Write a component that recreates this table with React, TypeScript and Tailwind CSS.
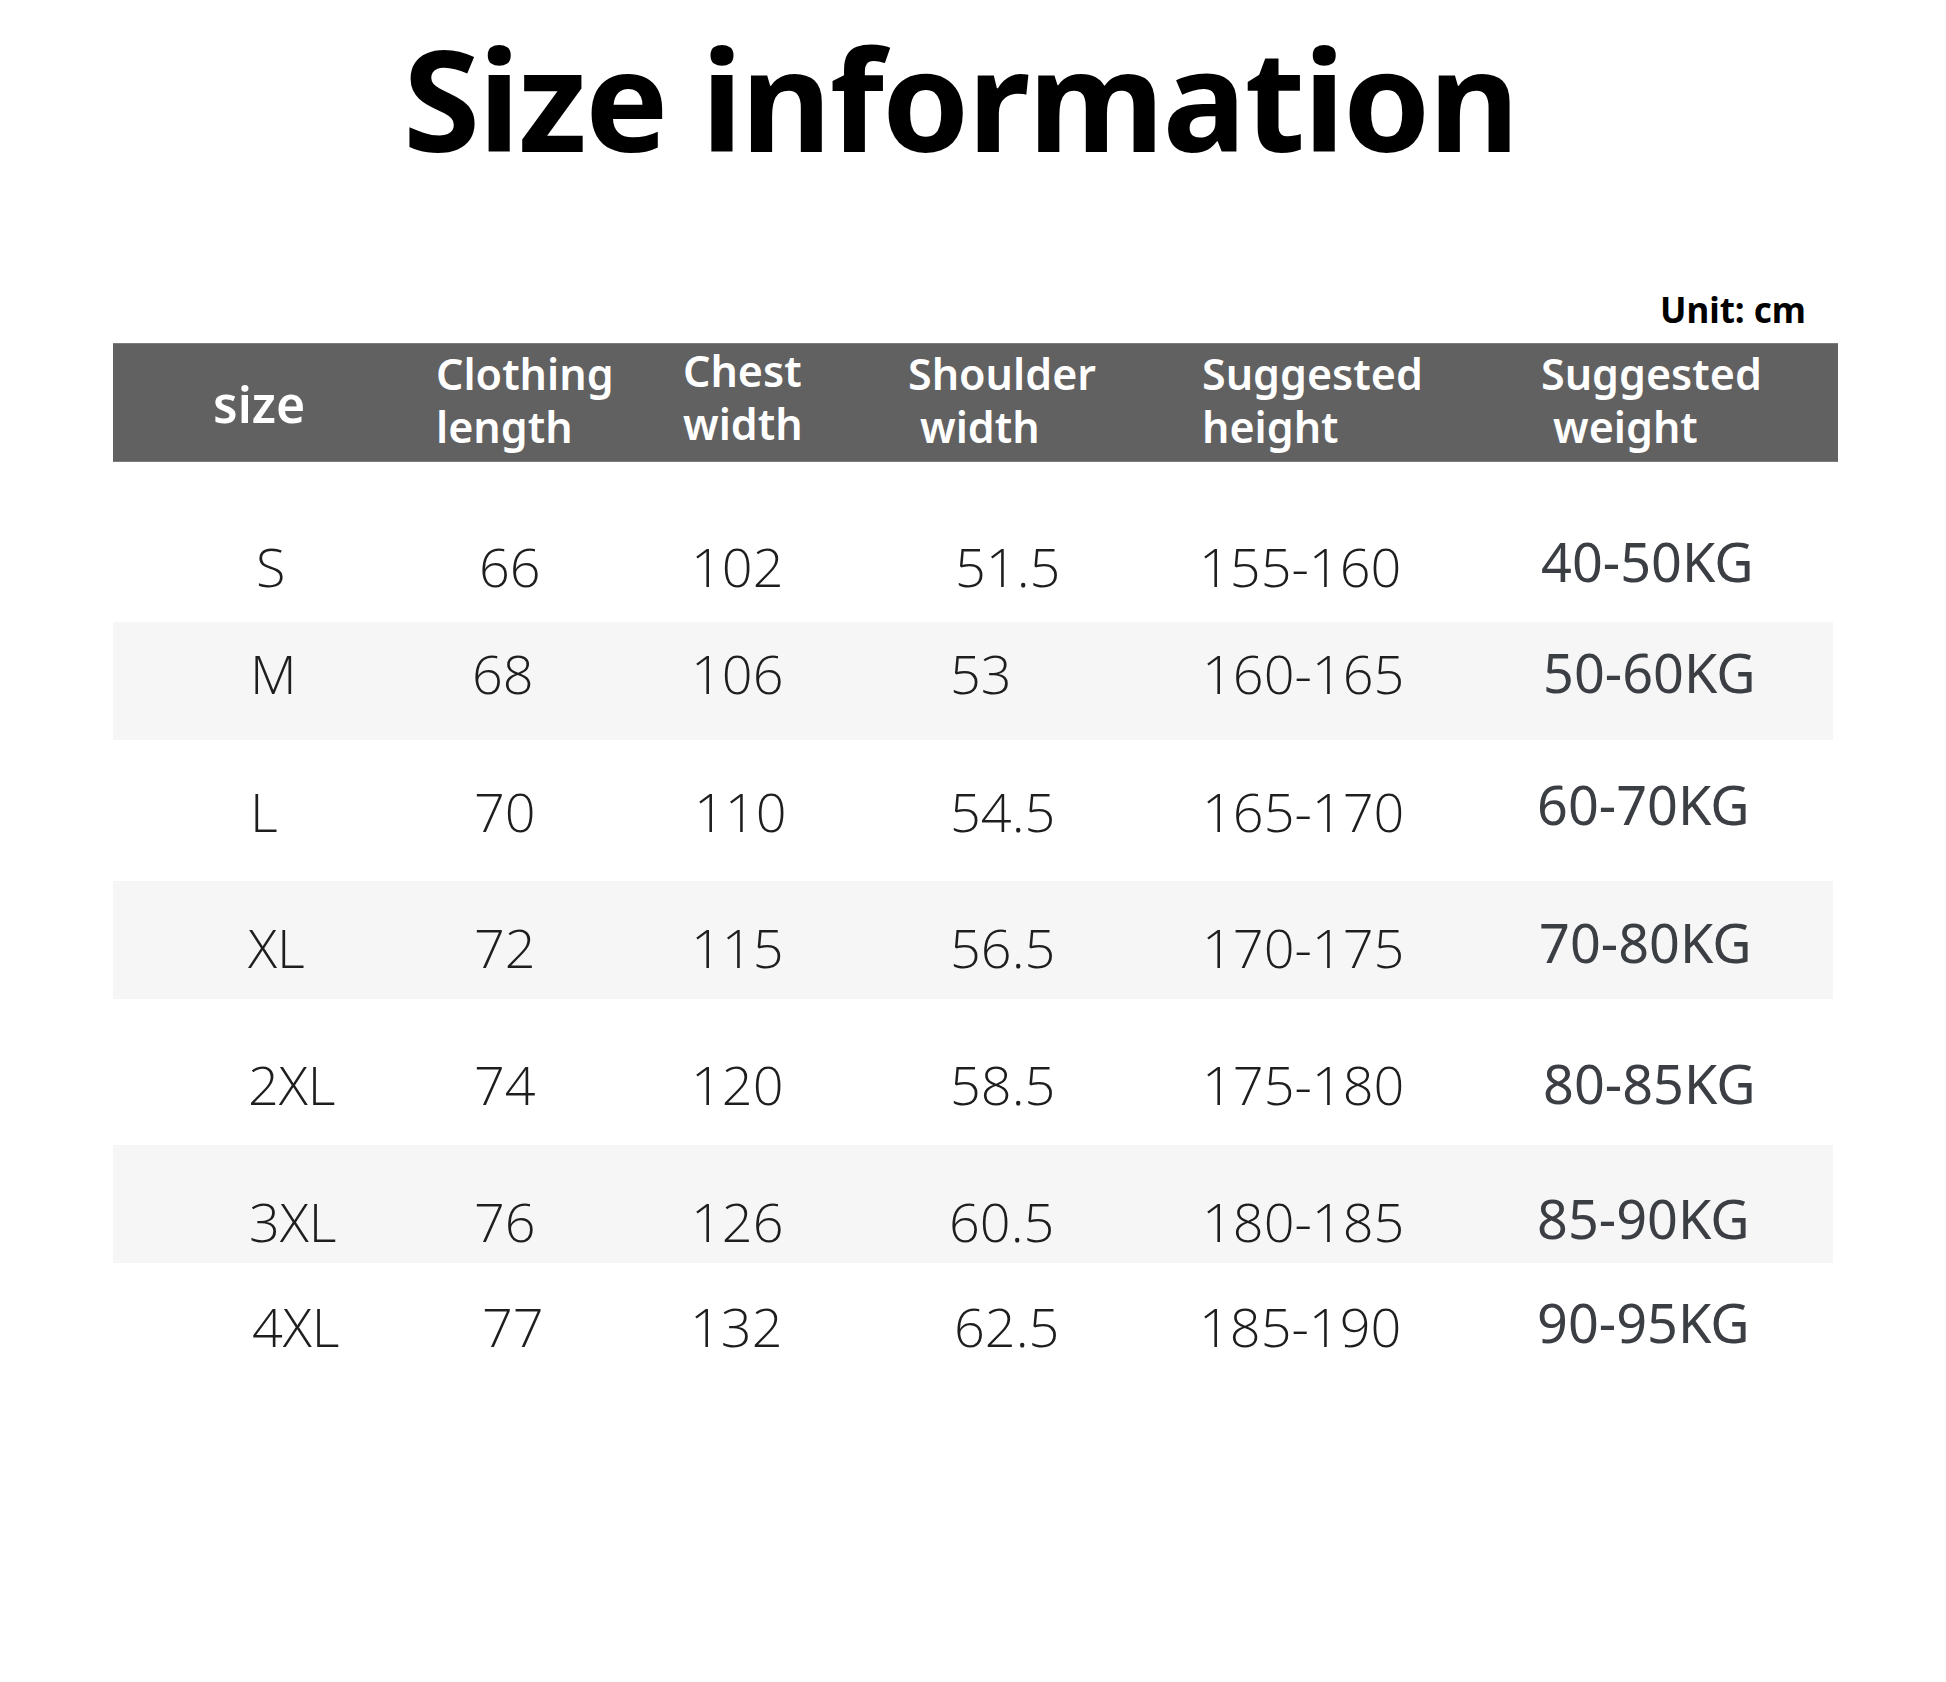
import React from "react";

type Row = {
  h: string;
  band: boolean;
  cells: [string, string, string, string, string, string];
  pad: [string, string, string, string, string, string];
};

const rows: Row[] = [
  {
    h: "h-[160px] pt-[48px]",
    band: false,
    cells: ["S", "66", "102", "51.5", "155-160", "40-50KG"],
    pad: ["pl-[143px]", "pl-[43px]", "pl-[8px]", "pl-[47px]", "pl-[0px]", "pl-[4px] pb-[10px]"],
  },
  {
    h: "h-[118px] pb-[16px]",
    band: true,
    cells: ["M", "68", "106", "53", "160-165", "50-60KG"],
    pad: ["pl-[137px]", "pl-[36px]", "pl-[8px]", "pl-[42px]", "pl-[3px]", "pl-[6px] pb-[2px]"],
  },
  {
    h: "h-[141px]",
    band: false,
    cells: ["L", "70", "110", "54.5", "165-170", "60-70KG"],
    pad: ["pl-[137px]", "pl-[38px]", "pl-[11px]", "pl-[42px]", "pl-[3px]", "pl-[0px] pb-[14px]"],
  },
  {
    h: "h-[118px] pt-[14px]",
    band: true,
    cells: ["XL", "72", "115", "56.5", "170-175", "70-80KG"],
    pad: ["pl-[135px]", "pl-[38px]", "pl-[8px]", "pl-[42px]", "pl-[3px]", "pl-[2px] pb-[10px]"],
  },
  {
    h: "h-[146px] pt-[24px]",
    band: false,
    cells: ["2XL", "74", "120", "58.5", "175-180", "80-85KG"],
    pad: ["pl-[135px]", "pl-[38px]", "pl-[8px]", "pl-[42px]", "pl-[3px]", "pl-[6px] pb-[2px]"],
  },
  {
    h: "h-[118px] pt-[34px]",
    band: true,
    cells: ["3XL", "76", "126", "60.5", "180-185", "85-90KG"],
    pad: ["pl-[136px]", "pl-[38px]", "pl-[8px]", "pl-[41px]", "pl-[3px]", "pl-[0px] pb-[6px]"],
  },
  {
    h: "h-[126px]",
    band: false,
    cells: ["4XL", "77", "132", "62.5", "185-190", "90-95KG"],
    pad: ["pl-[139px]", "pl-[46px]", "pl-[7px]", "pl-[46px]", "pl-[0px]", "pl-[0px] pb-[8px]"],
  },
];

const grid = "grid grid-cols-[323px_247px_225px_291px_338px_301px]";

export default function App() {
  return (
    <div className="w-[1946px] h-[1682px] bg-white text-[#111] font-['Noto_Sans','Open_Sans',sans-serif]">
      <div className="pt-[28px] pl-[403px] text-[140px] leading-none font-bold text-black tracking-[-2px]">
        Size information
      </div>
      <div className="mt-[124px] pr-[140px] text-right text-[35px] leading-none font-bold text-black">
        Unit: cm
      </div>
      <div className="ml-[113px] w-[1725px] mt-[16px]">
        <div className={`${grid} h-[119px] bg-[#616161] border-y border-[#7c7c7c] text-white font-semibold text-[43px] leading-[53px]`}>
          <div className="flex items-center pl-[100px] pt-[2px]">
            <span className="text-[50px] leading-none">size</span>
          </div>
          <div className="flex flex-col pt-[3px]">
            <span>Clothing</span>
            <span>length</span>
          </div>
          <div className="flex flex-col pt-[0px]">
            <span>Chest</span>
            <span>width</span>
          </div>
          <div className="flex flex-col pt-[3px]">
            <span>Shoulder</span>
            <span className="pl-[12px]">width</span>
          </div>
          <div className="flex flex-col pt-[3px] pl-[3px]">
            <span>Suggested</span>
            <span>height</span>
          </div>
          <div className="flex flex-col pt-[3px] pl-[4px]">
            <span>Suggested</span>
            <span className="pl-[12px]">weight</span>
          </div>
        </div>
        {rows.map((r) => (
          <div
            key={r.cells[0]}
            className={`${grid} ${r.h} ${r.band ? "bg-[#f6f6f6]" : "bg-white"} w-[1720px]`}
          >
            {r.cells.map((c, i) => (
              <div
                key={i}
                className={`flex items-center ${r.pad[i]} ${
                  i === 5
                    ? "text-[#3b3e43] font-normal font-['Noto_Sans',sans-serif]"
                    : "text-[#1e1e1e] font-light font-['Open_Sans','Noto_Sans',sans-serif]"
                } text-[54px] leading-none`}
              >
                {c}
              </div>
            ))}
          </div>
        ))}
      </div>
    </div>
  );
}
